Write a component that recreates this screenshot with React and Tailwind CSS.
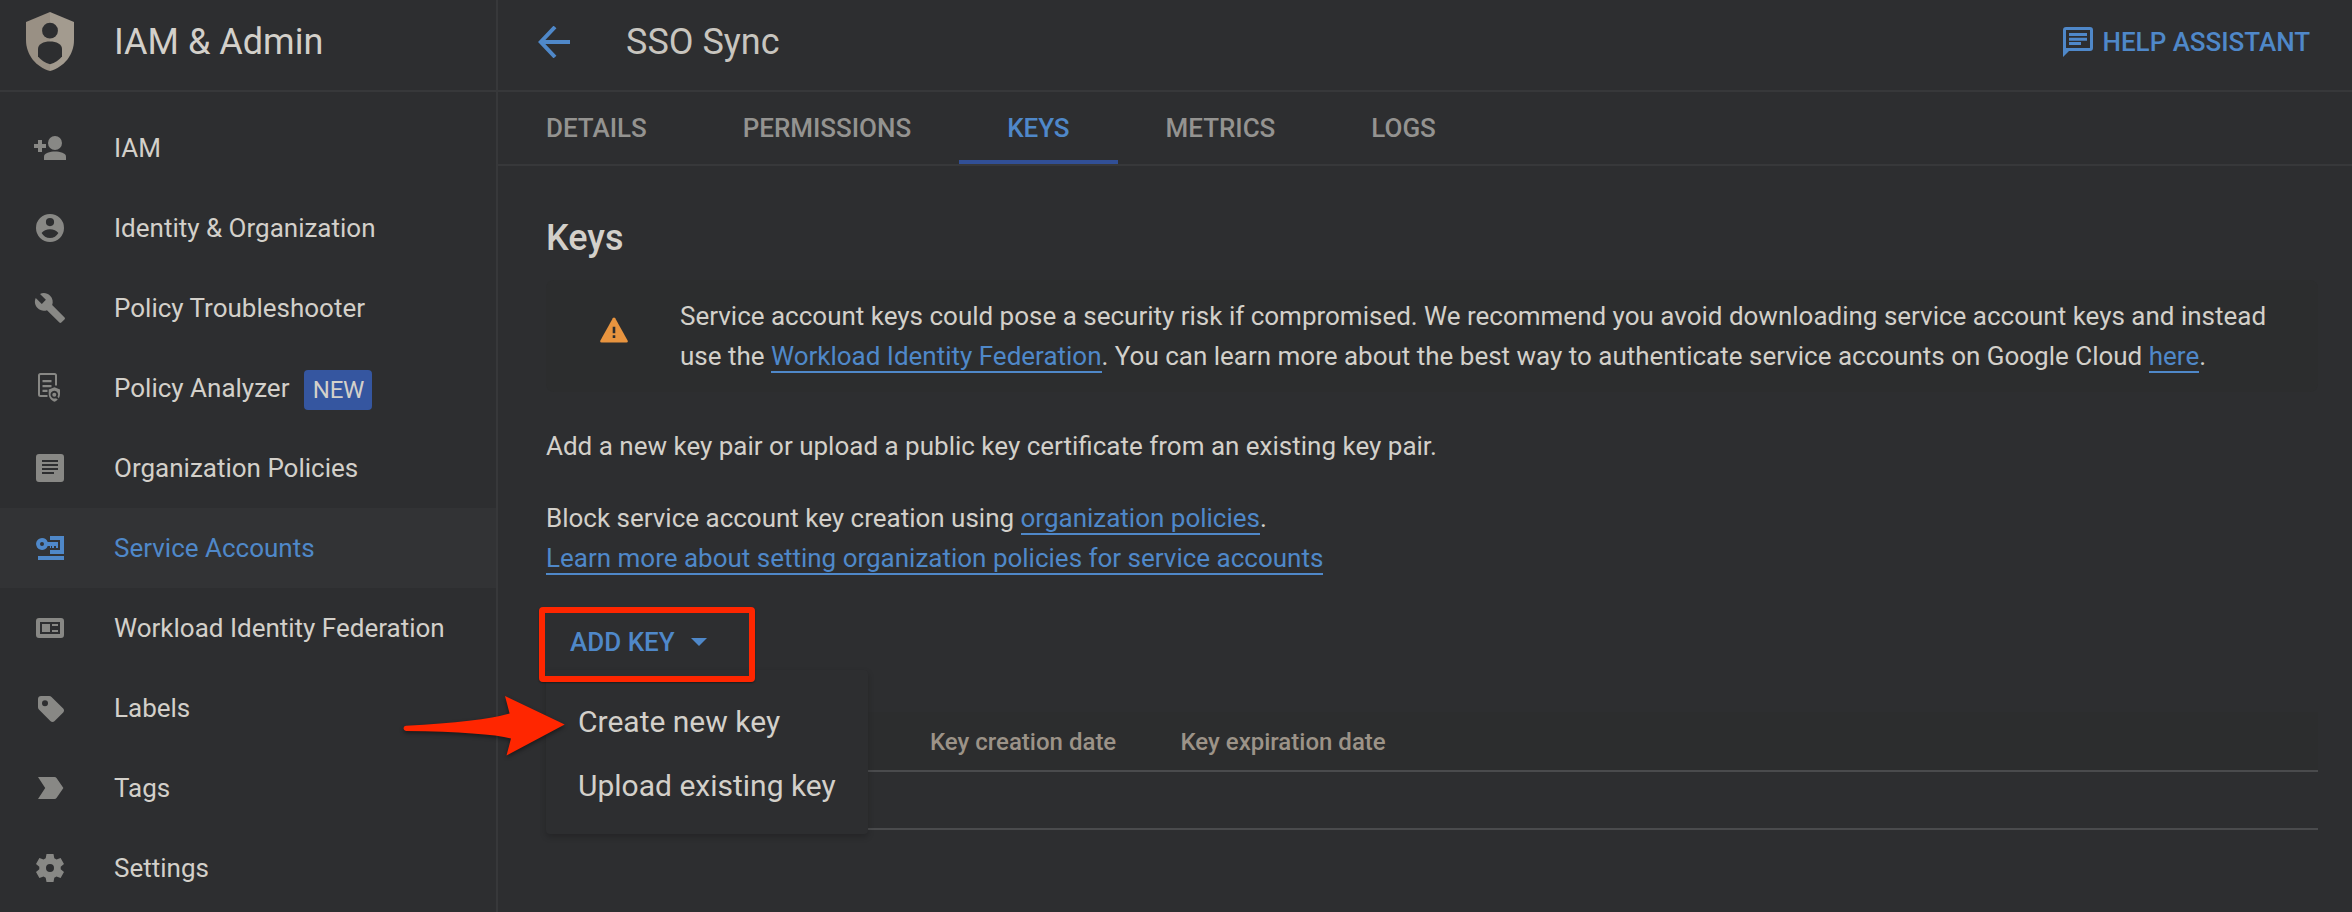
import React from "react";

function Glyph({ children }) {
  return (
    <svg viewBox="0 0 36 36" className="size-9 shrink-0" fill="currentColor">
      {children}
    </svg>
  );
}

const icons = {
  iam: (
    <Glyph>
      <path d="M6 10h4v4h4v4h-4v4H6v-4H2v-4h4z" />
      <circle cx="23" cy="13" r="7" />
      <path d="M12 30v-3.500c0-3.500 6-5 11-5s11 1.500 11 5V30z" />
    </Glyph>
  ),
  identity: (
    <Glyph>
      <path
        fillRule="evenodd"
        d="M18 4a14 14 0 1 0 0 28a14 14 0 0 0 0-28zM18 8a4.100 4.100 0 1 1 0 8.200a4.100 4.100 0 0 1 0-8.200zM9.600 23c1.600-2.500 5-3.800 8.400-3.800s6.800 1.300 8.400 3.800c-1.700 3-4.800 5-8.400 5s-6.700-2-8.400-5z"
      />
    </Glyph>
  ),
  wrench: (
    <Glyph>
      <path
        transform="translate(1.600 1.600) scale(1.365)"
        d="M22.700 19l-9.100-9.100c.9-2.300.4-5-1.500-6.900-2-2-5-2.400-7.400-1.300L9 6 6 9 1.600 4.700C.4 7.100.9 10.100 2.900 12.100c1.900 1.900 4.600 2.400 6.900 1.500l9.100 9.100c.4.4 1 .4 1.400 0l2.300-2.300c.5-.4.5-1.100.1-1.400z"
      />
    </Glyph>
  ),
  analyzer: (
    <Glyph>
      <path
        fill="none"
        stroke="currentColor"
        strokeWidth="2"
        d="M15.500 26H8.500Q7 26 7 24.500V5.500Q7 4 8.500 4H22.500Q24 4 24 5.500V15.500"
      />
      <path d="M10.500 10h9v2.200h-9zM10.500 15h9v2.200h-9zM10.500 19.700h5v2.200h-5z" />
      <path
        fillRule="evenodd"
        d="M22.500 17.300l5.500 2.200v4.500c0 3.600-2.300 6.500-5.500 7.700c-3.200-1.200-5.800-4.100-5.800-7.700v-4.500zM22.300 20.800a3.900 3.900 0 1 0 1.800 7.400l1.400 1.400l1.300-1.400l-1.300-1.400a3.900 3.900 0 0 0-3.200-6z"
      />
      <circle cx="22.300" cy="24.700" r="2" />
    </Glyph>
  ),
  policies: (
    <Glyph>
      <path
        fillRule="evenodd"
        d="M7 4h22a3 3 0 0 1 3 3v22a3 3 0 0 1-3 3H7a3 3 0 0 1-3-3V7a3 3 0 0 1 3-3zM10 10v2h16v-2zM10 14v2h16v-2zM10 18v2h16v-2zM10 22v2h12v-2z"
      />
    </Glyph>
  ),
  service: (
    <Glyph>
      <path
        fillRule="evenodd"
        d="M10 8a6 6 0 0 1 5.700 4H26v6h-2v-2h-2v2h-2v-2h-1v2h-1v-2h-2.300A6 6 0 1 1 10 8zM10 12a2 2 0 1 0 0 4a2 2 0 0 0 0-4z"
      />
      <path d="M18 6h14v18H18v-4h10V10H18zM6 26h26v4H6z" />
    </Glyph>
  ),
  workload: (
    <Glyph>
      <path
        fillRule="evenodd"
        d="M7 8h22a3 3 0 0 1 3 3v14a3 3 0 0 1-3 3H7a3 3 0 0 1-3-3V11a3 3 0 0 1 3-3zM8 12v12h20V12z"
      />
      <path d="M10 14h8v8h-8zM20 14h6v2h-6zM20 20h6v2h-6z" />
    </Glyph>
  ),
  labels: (
    <Glyph>
      <path
        fillRule="evenodd"
        d="M9 6h8.300c.9 0 1.600.3 2.200.9l11.700 11.700c1.100 1.100 1.100 2.700 0 3.800l-8.800 8.800c-1.100 1.100-2.700 1.100-3.800 0L6.900 19.500C6.300 18.900 6 18.200 6 17.300V9c0-1.700 1.300-3 3-3zM13 10.200a3 3 0 1 0 0 6a3 3 0 0 0 0-6z"
      />
    </Glyph>
  ),
  tags: (
    <Glyph>
      <path d="M6 7h16.500c.9 0 1.500.3 2 1l6.900 10l-6.900 10c-.5.700-1.100 1-2 1H6l7.200-11z" />
    </Glyph>
  ),
  settings: (
    <Glyph>
      <path
        fillRule="evenodd"
        d="M14.500 4h7l.8 4.300l2.200 1.300l4.100-1.500l3.400 6l-3.300 2.700v2.500l3.300 2.700l-3.400 6l-4.100-1.500l-2.200 1.300l-.8 4.200h-7l-.8-4.200l-2.200-1.300l-4.100 1.500l-3.400-6l3.300-2.700v-2.500l-3.300-2.700l3.400-6l4.100 1.500l2.200-1.300zM18 14a4 4 0 1 0 0 8a4 4 0 0 0 0-8z"
      />
    </Glyph>
  ),
};

const navItems = [
  { label: "IAM", icon: "iam" },
  { label: "Identity & Organization", icon: "identity" },
  { label: "Policy Troubleshooter", icon: "wrench" },
  { label: "Policy Analyzer", icon: "analyzer", badge: "NEW" },
  { label: "Organization Policies", icon: "policies" },
  { label: "Service Accounts", icon: "service", active: true },
  { label: "Workload Identity Federation", icon: "workload" },
  { label: "Labels", icon: "labels" },
  { label: "Tags", icon: "tags" },
  { label: "Settings", icon: "settings" },
];

const tabs = ["DETAILS", "PERMISSIONS", "KEYS", "METRICS", "LOGS"];

function ShieldLogo() {
  return (
    <svg viewBox="0 0 48 60" className="h-[60px] w-12 shrink-0">
      <path fill="#999084" d="M24 0L0 10v18c0 15 10 27 24 31z" />
      <path fill="#a39b8f" d="M24 0L48 10v18c0 15-10 27-24 31z" />
      <circle cx="24" cy="18.700" r="7.900" fill="#2d2e30" />
      <path fill="#2d2e30" d="M12 37c0-5 5.500-7.600 12-7.600s12 2.600 12 7.600v7.500c-3 3.700-7 6.300-12 7.800c-5-1.500-9-4.100-12-7.800z" />
    </svg>
  );
}

function Link({ children }) {
  return (
    <a className="border-b-2 border-[#4f88c9] text-[#4f88c9]">{children}</a>
  );
}

function Sidebar() {
  return (
    <aside className="flex w-[498px] shrink-0 flex-col border-r-2 border-[#37383a]">
      <div className="flex h-[92px] shrink-0 items-center gap-10 border-b-2 border-[#37383a] pb-1.5 pl-[26px]">
        <ShieldLogo />
        <h1 className="text-[36px] leading-[48px]">IAM &amp; Admin</h1>
      </div>
      <nav className="flex flex-col pt-4">
        {navItems.map((item) => (
          <a
            key={item.label}
            className={
              item.active
                ? "flex h-20 items-center bg-[#323335] pl-8 text-[#4f88c9]"
                : "flex h-20 items-center pl-8"
            }
          >
            <span className={item.active ? "mr-[46px]" : "mr-[46px] text-[#888885]"}>
              {icons[item.icon]}
            </span>
            <span>{item.label}</span>
            {item.badge && (
              <span className="mt-1 ml-[15px] flex h-10 w-[68px] items-center justify-center rounded bg-[#3556a0] text-[24px] tracking-[-0.2px]">
                {item.badge}
              </span>
            )}
          </a>
        ))}
      </nav>
    </aside>
  );
}

function Header() {
  return (
    <header className="flex h-[92px] shrink-0 items-center border-b-2 border-[#37383a] pr-[42px] pb-1.5 pl-10">
      <svg viewBox="0 0 32 32" className="size-8" fill="none" stroke="#4f88c9" strokeWidth="4">
        <path d="M17 1L2.800 16L17 31M3 16H32" />
      </svg>
      <h2 className="ml-[56px] text-[36px] leading-[48px] text-[#c8c5bf]">SSO Sync</h2>
      <button className="ml-auto flex items-center gap-[10px] font-medium tracking-[-0.03px] text-[#4f88c9]">
        <svg viewBox="0 0 30 30" className="size-[30px]" fill="currentColor">
          <path
            fillRule="evenodd"
            d="M3 0h24a3 3 0 0 1 3 3v18a3 3 0 0 1-3 3H6l-6 6V3a3 3 0 0 1 3-3zM3 3v18h24V3zM6 6v3h18V6zM6 10.800v3h18v-3zM6 15v3h12v-3z"
          />
        </svg>
        HELP ASSISTANT
      </button>
    </header>
  );
}

function Tabs() {
  return (
    <div className="flex h-[74px] shrink-0 border-b-2 border-[#37383a] font-medium tracking-[-0.03px] text-[#949390]">
      {tabs.map((tab) => (
        <div
          key={tab}
          className={
            tab === "KEYS"
              ? "flex items-center border-b-4 border-[#314f96] px-12 pt-1 text-[#4f88c9]"
              : "flex items-center px-12"
          }
        >
          {tab}
        </div>
      ))}
    </div>
  );
}

function Warning() {
  return (
    <div className="flex h-28 rounded-lg bg-[#2c2d2e] pt-4 pl-[54px]">
      <svg viewBox="0 0 28 26" className="mt-[21px] h-[26px] w-7 shrink-0">
        <path fill="#e8943f" d="M14 0.500Q14.700 0.500 15.200 1.300L27.600 23.500Q28.400 25.500 26.500 25.500H1.500Q-0.400 25.500 0.400 23.500L12.800 1.300Q13.300 0.500 14 0.500z" />
        <path fill="#2c2d2e" d="M12.700 9.800h2.600v6.400h-2.600zM12.700 18.300h2.600v2.700h-2.600z" />
      </svg>
      <p className="ml-[52px] tracking-[-0.006px] whitespace-nowrap">
        Service account keys could pose a security risk if compromised. We recommend you avoid downloading service account keys and instead
        <br />
        use the <Link>Workload Identity Federation</Link>. You can learn more about the best way to authenticate service accounts on Google Cloud{" "}
        <Link>here</Link>.
      </p>
    </div>
  );
}

function AddKey() {
  return (
    <div className="relative mt-9 h-14">
      <button className="flex h-14 w-[196px] items-center gap-4 pl-6 font-medium text-[#4f88c9]">
        ADD KEY
        <svg viewBox="0 0 16 8" className="h-2 w-4" fill="currentColor">
          <path d="M0 0h16l-8 8z" />
        </svg>
      </button>
      <ul className="absolute top-14 left-0 z-10 flex h-[164px] w-[322px] flex-col rounded-sm bg-[#2d2e30] pt-5 text-[30px] shadow-[0_3px_6px_rgba(0,0,0,0.2)]">
        <li className="flex h-16 items-center pl-8">Create new key</li>
        <li className="flex h-16 items-center pl-8">Upload existing key</li>
      </ul>
      <div className="absolute -top-[7px] -left-[7px] z-20 h-[75px] w-[216px] rounded-[4px] border-[6px] border-[#ff2600] shadow-[0_1px_2px_rgba(0,0,0,0.4)]" />
      <svg viewBox="0 0 164 64" className="absolute top-[80px] -left-[144px] z-20 h-16 w-[164px] overflow-visible drop-shadow-[0_2px_2px_rgba(0,0,0,0.45)]">
        <path
          fill="#ff2600"
          d="M4 31.700Q78 28 107.600 19.500L103 2L162.700 30.500L104.500 61.500L109 44.500Q84 38 4 37Q1.500 36.500 1.500 34.300Q1.500 32 4 31.700z"
        />
      </svg>
    </div>
  );
}

function KeysTable() {
  return (
    <div className="mt-[42px]">
      <div className="flex h-[60px] items-center border-b-2 border-[#4a4b4d] bg-[#2c2d2e] pt-0.5 pl-[384px] text-[24px] font-medium text-[#9c9388]">
        <div className="w-[250.500px]">Key creation date</div>
        <div>Key expiration date</div>
      </div>
      <div className="h-[58px] border-b-2 border-[#4a4b4d]" />
    </div>
  );
}

export default function App() {
  return (
    <div className="flex h-[912px] w-[2352px] overflow-hidden bg-[#2d2e30] font-['Roboto',sans-serif] text-[26px] leading-10 text-[#d3d0ca]">
      <Sidebar />
      <main className="flex min-w-0 flex-1 flex-col">
        <Header />
        <Tabs />
        <section className="flex flex-col pt-12 pr-[34px] pl-12">
          <h3 className="mb-[18px] text-[36px] leading-[48px] font-medium">Keys</h3>
          <Warning />
          <p className="mt-[34px]">Add a new key pair or upload a public key certificate from an existing key pair.</p>
          <p className="mt-8 tracking-[-0.006px]">
            Block service account key creation using <Link>organization policies</Link>.
            <br />
            <Link>Learn more about setting organization policies for service accounts</Link>
          </p>
          <AddKey />
          <KeysTable />
        </section>
      </main>
    </div>
  );
}
